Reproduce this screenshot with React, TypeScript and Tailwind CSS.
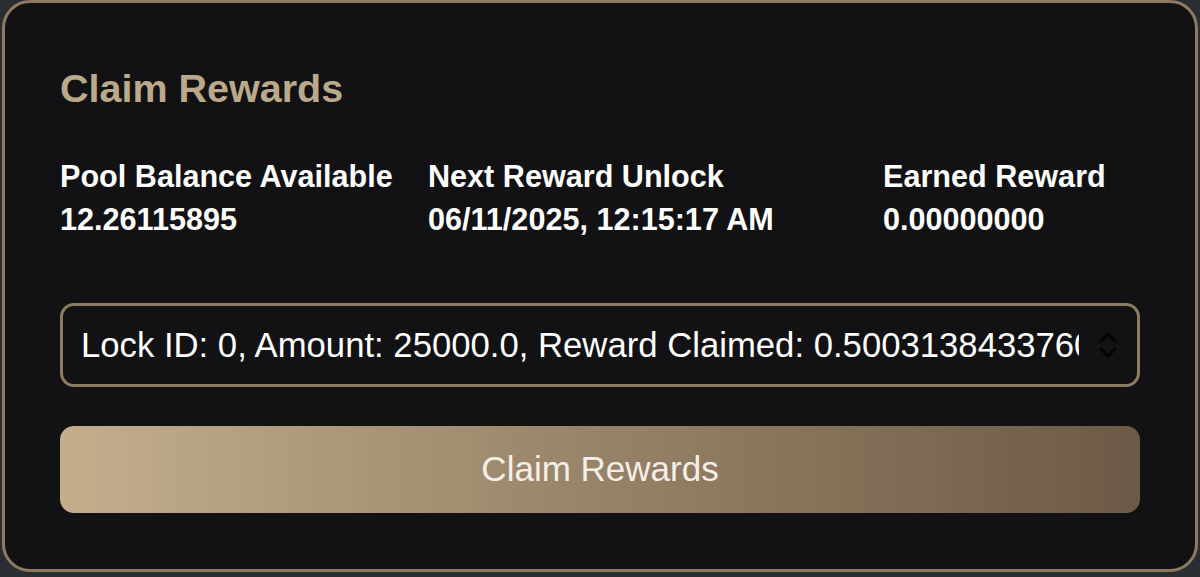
const stats = [
  { label: "Pool Balance Available", value: "12.26115895" },
  { label: "Next Reward Unlock", value: "06/11/2025, 12:15:17 AM" },
  { label: "Earned Reward", value: "0.00000000" },
];

function Chevrons() {
  return (
    <svg width="22" height="30" viewBox="0 0 22 30" fill="none">
      <path
        d="M4 11 L11 4 L18 11 M4 19 L11 26 L18 19"
        stroke="#030303"
        strokeWidth="3"
        strokeLinecap="round"
        strokeLinejoin="round"
      />
    </svg>
  );
}

export default function App() {
  return (
    <div
      className="h-[577px] w-full bg-[#2a2d31] px-[2px] pb-[5px]"
      style={{ fontFamily: '"Liberation Sans", Arial, sans-serif' }}
    >
      <div className="h-full rounded-[28px] border-[3px] border-[#8c7a63] bg-[#121113] px-[55px] pt-[61px]">
        <h2 className="text-[39.5px] font-bold leading-[48px] text-[#bba98b]">
          Claim Rewards
        </h2>

        <div className="mt-[43px] grid grid-cols-[368px_455px_1fr] text-[30.6px] font-bold leading-[43px] text-white">
          {stats.map((s) => (
            <div key={s.label} className="whitespace-nowrap">
              <p>{s.label}</p>
              <p>{s.value}</p>
            </div>
          ))}
        </div>

        <div className="mt-[62px] flex h-[84px] items-center rounded-[14px] border-[3px] border-[#8c7a63] bg-[#121113] pl-[18px] pr-[18px]">
          <div className="flex-1 overflow-hidden whitespace-nowrap text-[34.7px] text-white">
            Lock ID: 0, Amount: 25000.0, Reward Claimed: 0.500313843376093
          </div>
          <div className="ml-[18px] shrink-0">
            <Chevrons />
          </div>
        </div>

        <button
          type="button"
          className="mt-[39px] flex h-[87px] w-full items-center justify-center rounded-[14px] bg-gradient-to-r from-[#c4ae8c] to-[#6b5a45] text-[35px] text-[#f3efe8]"
        >
          Claim Rewards
        </button>
      </div>
    </div>
  );
}
